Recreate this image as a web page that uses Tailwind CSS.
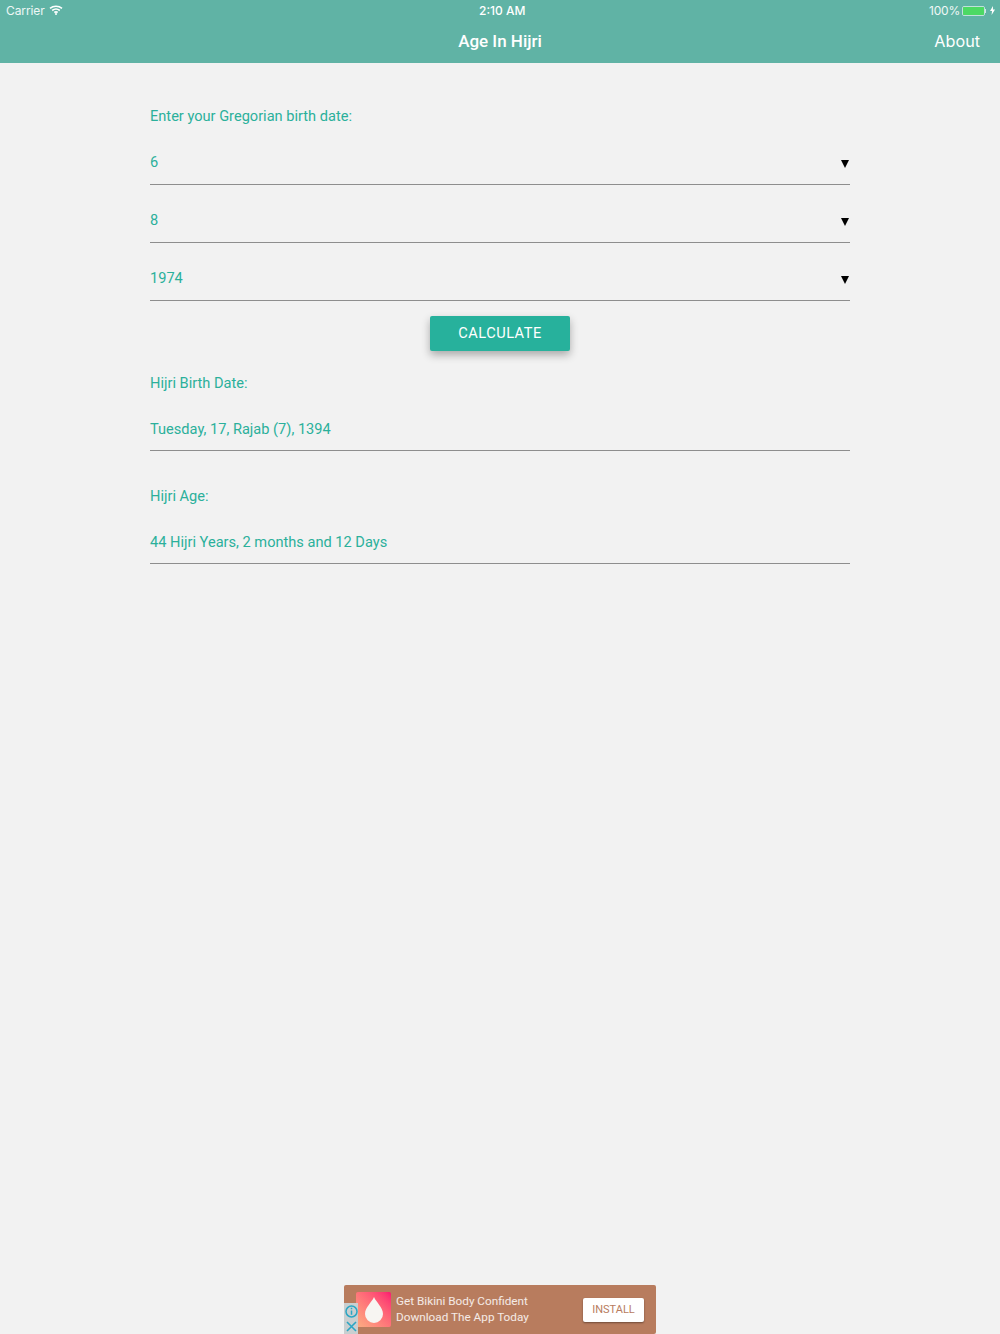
<!DOCTYPE html>
<html lang="en">
<head>
    <meta charset="UTF-8">
    <meta name="viewport" content="width=device-width, initial-scale=1.0">
    <title>Age In Hijri</title>
    <script src="https://cdn.jsdelivr.net/npm/@tailwindcss/browser@4"></script>
</head>
<body class="bg-[#f2f2f2] font-['Roboto',sans-serif]">
<div class="w-[1000px] h-[1334px] flex flex-col overflow-hidden">

    <!-- Header -->
    <header class="h-[63px] shrink-0 bg-[#60b3a5] text-white">
        <div class="relative h-[21px] flex items-center justify-between font-['Inter',sans-serif] text-[12px] text-white/90">
            <div class="flex items-center pl-[6px] gap-[4px]">
                <span class="tracking-[-0.1px]">Carrier</span>
                <svg width="14" height="10" viewBox="0 0 14 10" fill="none" stroke="white" stroke-width="1.6" class="-mt-[1px]">
                    <path d="M1 3.400C4.400 .6 9.600 .6 13 3.400"/>
                    <path d="M3.200 5.500C5.400 3.800 8.600 3.800 10.800 5.500"/>
                    <path d="M5.300 7.500C6.300 6.800 7.700 6.800 8.700 7.500"/>
                    <circle cx="7" cy="9" r="1" fill="white" stroke="none"/>
                </svg>
            </div>
            <span class="absolute left-[479px] font-medium text-white">2:10 AM</span>
            <div class="flex items-center pr-[5px] gap-[2px]">
                <span class="tracking-[-0.2px]">100%</span>
                <div class="flex items-center">
                    <div class="w-[23px] h-[10px] rounded-[2px] border border-white/60">
                        <div class="w-full h-full rounded-[1px] bg-[#4cd964]"></div>
                    </div>
                    <div class="w-[1px] h-[4px] bg-white/70"></div>
                </div>
                <svg width="5" height="9" viewBox="0 0 5 9" fill="white" class="ml-[2px]"><path d="M3 0 0 5h2L1.600 9 5 3.600H3z"/></svg>
            </div>
        </div>
        <div class="h-[42px] relative flex items-center justify-center">
            <h1 class="text-[17px] font-medium">Age In Hijri</h1>
            <a class="absolute right-[20px] top-[8px] text-[16.200px] font-['Inter',sans-serif] font-normal">About</a>
        </div>
    </header>

    <!-- Form -->
    <main class="flex-1 px-[150px] pt-[43px] text-[14.600px] leading-[20px] text-[#2bb09b]">
        <p>Enter your Gregorian birth date:</p>

        <div class="mt-[15px] h-[44px] border-b border-[#8e8e8e] flex items-start justify-between pt-[11px]">
            <span>6</span>
            <span class="w-0 h-0 mt-[8px] mr-[1px] border-x-[4.500px] border-x-transparent border-t-[8px] border-t-black"></span>
        </div>
        <div class="mt-[14px] h-[44px] border-b border-[#8e8e8e] flex items-start justify-between pt-[11px]">
            <span>8</span>
            <span class="w-0 h-0 mt-[8px] mr-[1px] border-x-[4.500px] border-x-transparent border-t-[8px] border-t-black"></span>
        </div>
        <div class="mt-[14px] h-[44px] border-b border-[#8e8e8e] flex items-start justify-between pt-[11px]">
            <span>1974</span>
            <span class="w-0 h-0 mt-[8px] mr-[1px] border-x-[4.500px] border-x-transparent border-t-[8px] border-t-black"></span>
        </div>

        <div class="flex justify-center mt-[15px]">
            <button class="w-[140px] h-[35px] pb-[2px] bg-[#27b19c] text-white text-[14.600px] tracking-[0.5px] rounded-[2px] shadow-[0_4px_8px_rgba(0,0,0,0.3)]">CALCULATE</button>
        </div>

        <p class="mt-[22px]">Hijri Birth Date:</p>
        <div class="mt-[26px] h-[32px] border-b border-[#8e8e8e]">Tuesday, 17, Rajab (7), 1394</div>

        <p class="mt-[35px]">Hijri Age:</p>
        <div class="mt-[26px] h-[32px] border-b border-[#8e8e8e]">44 Hijri Years, 2 months and 12 Days</div>
    </main>

    <!-- Ad banner -->
    <div class="h-[49px] shrink-0 flex justify-center">
        <div class="relative w-[312px] h-[49px] bg-[#b87c5e] rounded-[2px] flex items-center pl-[12px] pr-[12px]">
            <div class="w-[35px] h-[35px] rounded-[2px] bg-gradient-to-bl from-[#fb1170] to-[#fbae82] flex items-center justify-center">
                <svg width="18" height="26" viewBox="0 0 18 26"><path d="M9 0C7 5 0 10.500 0 17a9 9 0 0 0 18 0C18 10.500 11 5 9 0z" fill="#f7f5f2"/></svg>
            </div>
            <div class="ml-[5px] flex-1 text-[11.750px] leading-[15.500px] text-white/85">
                <div>Get Bikini Body Confident</div>
                <div>Download The App Today</div>
            </div>
            <button class="w-[61px] h-[24px] pt-[1px] bg-white rounded-[2px] text-[11px] text-[#b87c5e] shadow-[0_1px_2px_rgba(0,0,0,0.4)]">INSTALL</button>
            <div class="absolute left-0 bottom-0 w-[14px] h-[31px] bg-[#c9cfd0] flex flex-col items-center justify-around">
                <svg width="13" height="13" viewBox="0 0 13 13" fill="none" stroke="#2ba6c4" stroke-width="1.500"><circle cx="6.500" cy="6.500" r="5.500"/><path d="M6.500 5.500v4.200M6.500 2.800v1.500"/></svg>
                <svg width="11" height="11" viewBox="0 0 11 11" fill="none" stroke="#2ba6c4" stroke-width="1.600"><path d="M1 1l9 9M10 1l-9 9"/></svg>
            </div>
        </div>
    </div>
</div>
</body>
</html>
